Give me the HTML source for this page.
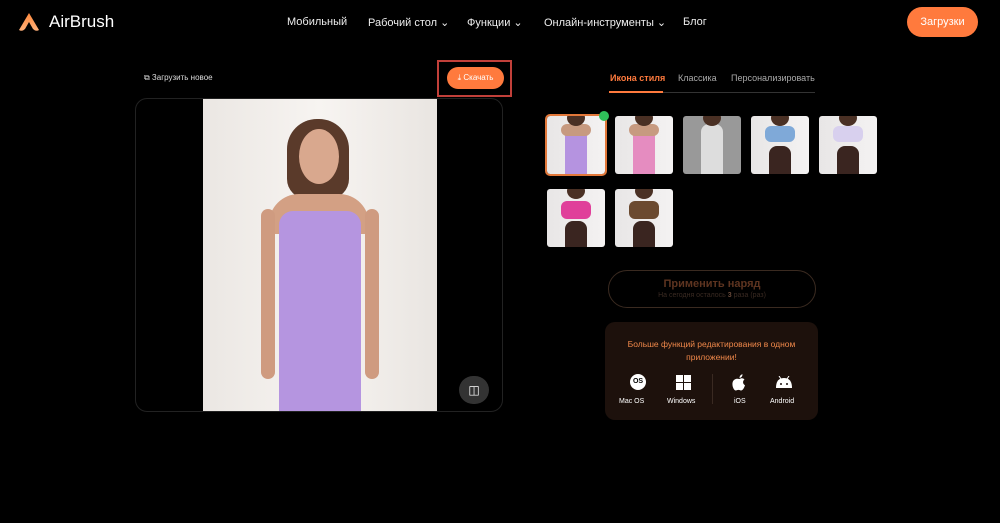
<!DOCTYPE html>
<html><head><meta charset="utf-8"><style>
*{margin:0;padding:0;box-sizing:border-box}
body{width:1000px;height:523px;background:#000;font-family:"Liberation Sans",sans-serif;color:#fff;position:relative;overflow:hidden}
.a{position:absolute}
.nav{font-size:11px;color:#eee;top:16px}
.th{position:absolute;width:58px;height:58px;border-radius:3px;background:linear-gradient(90deg,#e8e6e6,#f4f2f2);overflow:hidden}
.th .b{position:absolute;left:18px;top:8px;width:22px;height:50px;border-radius:8px 8px 0 0}
.th .h{position:absolute;left:20px;top:-6px;width:18px;height:16px;border-radius:50%;background:#4a3024}
.th .s{position:absolute;left:14px;top:8px;width:30px;height:12px;background:#c79a80;border-radius:6px}
</style></head><body>
<svg class="a" style="left:18px;top:12px" width="22" height="20" viewBox="0 0 22 20"><defs><linearGradient id="g" x1="0" y1="0" x2="0" y2="1"><stop offset="0" stop-color="#ff8a3d"/><stop offset="1" stop-color="#ffb07a"/></linearGradient></defs><path d="M11 1 L21 18 Q18 20 15 17 L11 10 L7 17 Q4 20 1 18 Z" fill="url(#g)"/></svg>
<div class="a" style="left:49px;top:12px;font-size:17px">AirBrush</div>
<div class="a nav" style="left:287px">Мобильный</div>
<div class="a nav" style="left:368px">Рабочий стол ⌄</div>
<div class="a nav" style="left:467px">Функции ⌄</div>
<div class="a nav" style="left:544px">Онлайн-инструменты ⌄</div>
<div class="a nav" style="left:683px">Блог</div>
<div class="a" style="left:907px;top:7px;width:71px;height:30px;border-radius:15px;background:#ff7a3d;font-size:11px;line-height:30px;text-align:center">Загрузки</div>

<div class="a" style="left:144px;top:73px;font-size:8px;color:#ddd">⧉ Загрузить новое</div>
<div class="a" style="left:437px;top:60px;width:75px;height:37px;border:2px solid #c2403a"></div>
<div class="a" style="left:447px;top:67px;width:57px;height:22px;border-radius:11px;background:#ff7a3d;font-size:8px;line-height:22px;text-align:center">⤓ Скачать</div>

<div class="a" style="left:135px;top:98px;width:368px;height:314px;border:1px solid #222;border-radius:12px;overflow:hidden;background:#000">
 <div class="a" style="left:67px;top:0;width:234px;height:314px;background:linear-gradient(90deg,#ebe7e3,#f7f4f1 50%,#e9e5e1)">
  <div class="a" style="left:84px;top:20px;width:62px;height:80px;border-radius:30px 30px 20px 20px;background:#5a3a2a"></div>
  <div class="a" style="left:96px;top:30px;width:40px;height:55px;border-radius:50%;background:#d9a88e"></div>
  <div class="a" style="left:66px;top:95px;width:100px;height:40px;border-radius:30px 30px 0 0;background:#d3a084"></div>
  <div class="a" style="left:58px;top:110px;width:14px;height:170px;border-radius:7px;background:#cf9b80"></div>
  <div class="a" style="left:162px;top:110px;width:14px;height:170px;border-radius:7px;background:#cf9b80"></div>
  <div class="a" style="left:76px;top:112px;width:82px;height:202px;border-radius:14px 14px 0 0;background:#b595e0"></div>
 </div>
 <div class="a" style="left:323px;top:277px;width:30px;height:28px;border-radius:14px;background:#333;font-size:12px;text-align:center;line-height:28px">◫</div>
</div>

<div class="a" style="left:610px;top:73px;font-size:9px;color:#ff7a3d;font-weight:bold">Икона стиля</div>
<div class="a" style="left:678px;top:73px;font-size:9px;color:#aaa">Классика</div>
<div class="a" style="left:731px;top:73px;font-size:9px;color:#aaa">Персонализировать</div>
<div class="a" style="left:609px;top:92px;width:206px;height:1px;background:#333"></div>
<div class="a" style="left:609px;top:91px;width:54px;height:2px;background:#ff7a3d"></div>

<div class="th" style="left:547px;top:116px;outline:2px solid #e2783a"><div class="b" style="background:#b593e0"></div><div class="s"></div><div class="h"></div></div>
<div class="a" style="left:599px;top:111px;width:10px;height:10px;border-radius:50%;background:#2fbf5a"></div>
<div class="th" style="left:615px;top:116px"><div class="b" style="background:#e58cc0"></div><div class="s"></div><div class="h"></div></div>
<div class="th" style="left:683px;top:116px;background:#999"><div class="b" style="background:#ddd"></div><div class="h"></div></div>
<div class="th" style="left:751px;top:116px"><div class="b" style="background:#3a2520;top:30px"></div><div class="s" style="background:#7fa9d8;top:10px;height:16px"></div><div class="h"></div></div>
<div class="th" style="left:819px;top:116px"><div class="b" style="background:#3a2520;top:30px"></div><div class="s" style="background:#d8d0ee;top:10px;height:16px"></div><div class="h"></div></div>
<div class="th" style="left:547px;top:189px"><div class="b" style="background:#3a2520;top:32px"></div><div class="s" style="background:#e0409a;top:12px;height:18px"></div><div class="h"></div></div>
<div class="th" style="left:615px;top:189px"><div class="b" style="background:#3a2520;top:32px"></div><div class="s" style="background:#6b4a30;top:12px;height:18px"></div><div class="h"></div></div>

<div class="a" style="left:608px;top:270px;width:208px;height:38px;border:1px solid #3a2a20;border-radius:19px;text-align:center">
 <div style="font-size:11px;color:#5e3420;font-weight:bold;margin-top:7px">Применить наряд</div>
 <div style="font-size:7px;color:#3a2a22;margin-top:2px">На сегодня осталось <b style="color:#6a4a3a">3</b> раза (раз)</div>
</div>

<div class="a" style="left:605px;top:322px;width:213px;height:98px;border-radius:10px;background:#1d110c;text-align:center">
 <div style="font-size:8.5px;color:#f0884a;margin-top:16px;line-height:13px">Больше функций редактирования в одном<br>приложении!</div>
 <div class="a" style="left:107px;top:52px;width:1px;height:30px;background:#3a2a22"></div>
 <div class="a" style="left:25px;top:52px;width:16px;height:16px;border-radius:50%;background:#fff;color:#000;font-size:7px;line-height:16px;font-weight:bold">OS</div>
 <svg class="a" style="left:71px;top:53px" width="15" height="15"><rect x="0" y="0" width="7" height="7" fill="#fff"/><rect x="8" y="0" width="7" height="7" fill="#fff"/><rect x="0" y="8" width="7" height="7" fill="#fff"/><rect x="8" y="8" width="7" height="7" fill="#fff"/></svg>
 <svg class="a" style="left:127px;top:52px" width="15" height="18" viewBox="0 0 15 18"><path d="M7.5 5 C9 4 11 3.8 12.5 5.5 C10.5 7 10.5 10 13 11.2 C12.3 13.5 10.8 16.5 9 16.5 C8 16.5 7.8 15.9 6.5 15.9 C5.2 15.9 4.8 16.5 3.8 16.5 C2 16.5 0 12.5 0.5 9 C1 5.5 4 4 7.5 5 Z" fill="#fff"/><path d="M7.5 4 C7.5 2 9 0.5 10.5 0.3 C10.6 2.3 9 4 7.5 4 Z" fill="#fff"/></svg>
 <svg class="a" style="left:170px;top:54px" width="18" height="13"><path d="M1 12 Q1 2 9 2 Q17 2 17 12 Z" fill="#fff"/><circle cx="6" cy="8" r="1" fill="#1d110c"/><circle cx="12" cy="8" r="1" fill="#1d110c"/><path d="M4 0 L6 3 M14 0 L12 3" stroke="#fff" stroke-width="1"/></svg>
 <div class="a" style="left:14px;top:76px;font-size:7px">Mac OS</div>
 <div class="a" style="left:62px;top:76px;font-size:7px">Windows</div>
 <div class="a" style="left:129px;top:76px;font-size:7px">iOS</div>
 <div class="a" style="left:165px;top:76px;font-size:7px">Android</div>
</div>
</body></html>
